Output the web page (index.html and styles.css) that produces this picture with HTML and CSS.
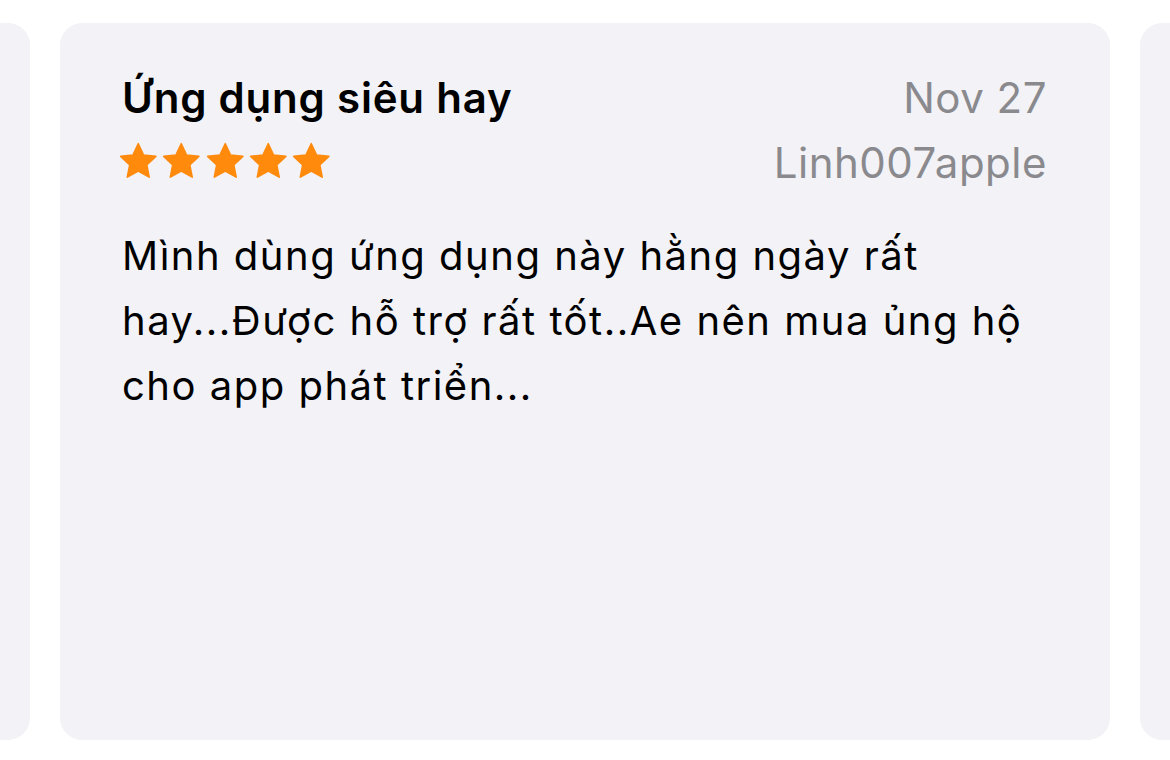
FILE: index.html
```html
<!DOCTYPE html>
<html lang="vi">
<head>
<meta charset="utf-8">
<title>Reviews</title>
<link rel="stylesheet" href="styles.css">
</head>
<body>
<div class="carousel">
  <article class="card"></article>
  <article class="card">
    <header class="card-head">
      <div class="head-left">
        <h2 class="title">Ứng dụng siêu hay</h2>
        <div class="stars" aria-label="5 sao">
          <svg class="star" viewBox="2.2 2.2 19.6 18.7"><path d="M12 2.6l2.85 6.05 6.6.78-4.88 4.55 1.3 6.55L12 17.3l-5.87 3.23 1.3-6.55-4.88-4.55 6.6-.78z"/></svg>
          <svg class="star" viewBox="2.2 2.2 19.6 18.7"><path d="M12 2.6l2.85 6.05 6.6.78-4.88 4.55 1.3 6.55L12 17.3l-5.87 3.23 1.3-6.55-4.88-4.55 6.6-.78z"/></svg>
          <svg class="star" viewBox="2.2 2.2 19.6 18.7"><path d="M12 2.6l2.85 6.05 6.6.78-4.88 4.55 1.3 6.55L12 17.3l-5.87 3.23 1.3-6.55-4.88-4.55 6.6-.78z"/></svg>
          <svg class="star" viewBox="2.2 2.2 19.6 18.7"><path d="M12 2.6l2.85 6.05 6.6.78-4.88 4.55 1.3 6.55L12 17.3l-5.87 3.23 1.3-6.55-4.88-4.55 6.6-.78z"/></svg>
          <svg class="star" viewBox="2.2 2.2 19.6 18.7"><path d="M12 2.6l2.85 6.05 6.6.78-4.88 4.55 1.3 6.55L12 17.3l-5.87 3.23 1.3-6.55-4.88-4.55 6.6-.78z"/></svg>
        </div>
      </div>
      <div class="head-right">
        <div class="date">Nov 27</div>
        <div class="author">Linh007apple</div>
      </div>
    </header>
    <p class="body">Mình dùng ứng dụng này hằng ngày rất hay...Được hỗ trợ rất tốt..Ae nên mua ủng hộ cho app phát triển...</p>
  </article>
  <article class="card"></article>
</div>
</body>
</html>
```

FILE: styles.css
```css
html, body {
  margin: 0;
  padding: 0;
  background: #ffffff;
}

body {
  font-family: Inter, "Noto Sans", "Liberation Sans", sans-serif;
  color: #000;
  -webkit-font-smoothing: antialiased;
}

.carousel {
  display: flex;
  justify-content: center;
  gap: 30px;
  padding-top: 23px;
  overflow: hidden;
  width: 1170px;
}

.card {
  flex: 0 0 1050px;
  height: 717px;
  box-sizing: border-box;
  background: #f2f2f7;
  border-radius: 22px;
  padding: 51px 63px 0 62px;
}

.card-head {
  display: flex;
  justify-content: space-between;
  align-items: flex-start;
}

.head-left {
  display: flex;
  flex-direction: column;
}

.title {
  margin: 0;
  font-size: 42px;
  line-height: 48px;
  font-weight: 600;
  letter-spacing: 0.8px;
}

.stars {
  display: flex;
  gap: 6.8px;
  margin-top: 21px;
  margin-left: -2px;
}

.star {
  width: 36.5px;
  height: 34.8px;
  fill: #ff8a0c;
  stroke: #ff8a0c;
  stroke-width: 0.9;
  stroke-linejoin: round;
  overflow: visible;
}

.head-right {
  display: flex;
  flex-direction: column;
  align-items: flex-end;
  color: #8a8a8e;
  font-size: 42px;
  line-height: 48px;
  letter-spacing: 0.5px;
}

.author {
  margin-top: 17px;
}

.body {
  margin: 36px 0 0;
  font-size: 40px;
  line-height: 65px;
  font-weight: 400;
  letter-spacing: 1.5px;
}
```
